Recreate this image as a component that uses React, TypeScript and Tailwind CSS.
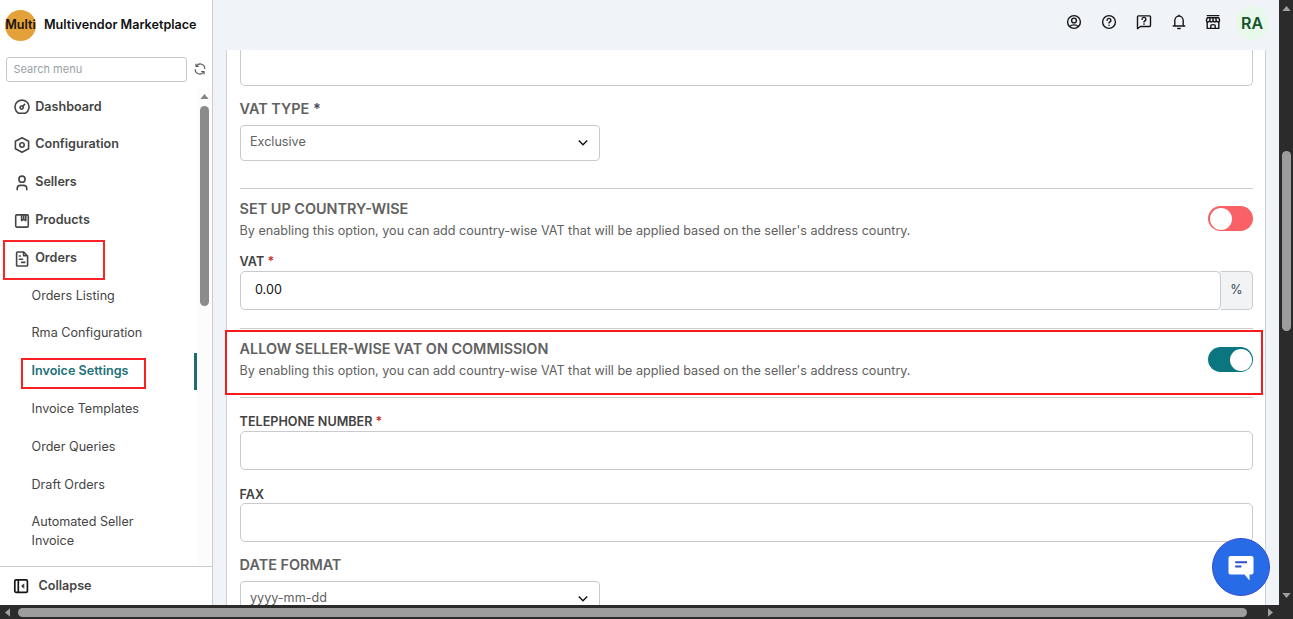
import React from "react";

type IconProps = { children: React.ReactNode; size?: string; width?: number };

function Icon({ children, size = "size-4", width = 1.6 }: IconProps) {
  return (
    <svg
      viewBox="0 0 16 16"
      className={`${size} shrink-0`}
      fill="none"
      stroke="currentColor"
      strokeWidth={width}
      strokeLinecap="round"
      strokeLinejoin="round"
    >
      {children}
    </svg>
  );
}

const DashboardIcon = () => (
  <Icon width={1.6}>
    <path d="M4.6 14.2A7 7 0 1 1 11.4 14.2Z" />
    <circle cx="7.6" cy="8.6" r="1.6" />
    <path d="M8.6 7.4 10.6 5.4" />
  </Icon>
);
const ConfigurationIcon = () => (
  <Icon width={1.6}>
    <path d="M8 .8 14.6 4.3V11.7L8 15.2 1.4 11.7V4.3Z" />
    <circle cx="8" cy="8" r="2.2" />
  </Icon>
);
const SellersIcon = () => (
  <Icon width={1.6}>
    <circle cx="8" cy="4.2" r="3.1" />
    <path d="M3.2 14.8V13.6A3.2 3.2 0 0 1 6.4 10.4H9.6A3.2 3.2 0 0 1 12.8 13.6V14.8" />
  </Icon>
);
const ProductsIcon = () => (
  <Icon width={1.6}>
    <rect x="1.7" y="1.9" width="12.6" height="12.2" rx="1" />
    <path d="M7.6 2V7.6L9.7 6.2 11.8 7.6V2M9.7 2.2V5.6" />
  </Icon>
);
const OrdersIcon = () => (
  <Icon width={1.6}>
    <path d="M3.6 1H9.6L13.6 5V14.2A.8.8 0 0 1 12.8 15H3.4A.8.8 0 0 1 2.6 14.2V2A1 1 0 0 1 3.6 1Z" />
    <path d="M9.6 1.4V4.8H13.2M5.4 5H6.4M5.4 8.2H8.6M7.6 11.4H10.8" />
  </Icon>
);
const CollapseIcon = () => (
  <Icon width={1.7}>
    <rect x="1.8" y="1.8" width="12.6" height="12.6" rx="1.4" />
    <path d="M5.3 2V14.2" />
    <path d="M10.6 6.1 8.6 8.1 10.6 10.1Z" fill="currentColor" strokeWidth="0.6" />
  </Icon>
);
const RefreshIcon = () => (
  <Icon size="size-3" width={1.5}>
    <path d="M1.6 8.6A6 6 0 0 0 12.6 12M14.4 7.4A6 6 0 0 0 3.4 4" />
    <path d="M2.6 1.4V4.6H5.8M13.4 14.6V11.4H10.2" />
  </Icon>
);
const AccountIcon = () => (
  <Icon width={1.4}>
    <circle cx="8" cy="8" r="6.4" />
    <circle cx="8" cy="6.5" r="2.4" />
    <path d="M3.8 12.4C5.6 10.4 10.4 10.4 12.2 12.4" />
  </Icon>
);
const HelpIcon = () => (
  <Icon width={1.4}>
    <circle cx="8" cy="8" r="6.4" />
    <path d="M6.1 6.4A1.9 1.9 0 1 1 8.8 8Q8 8.4 8 9.1" />
    <path d="M8 11.2V11.3" strokeWidth="1.6" />
  </Icon>
);
const ChatHelpIcon = () => (
  <Icon width={1.4}>
    <path d="M2.4 1.9H13.6Q14.5 1.9 14.5 2.8V11.6Q14.5 12.5 13.6 12.5H4.4L1.5 14.7V2.8Q1.5 1.9 2.4 1.9Z" />
    <path d="M6.1 5.4A1.9 1.9 0 1 1 8.8 7Q8 7.4 8 8" />
    <path d="M8 10V10.1" strokeWidth="1.6" />
  </Icon>
);
const BellIcon = () => (
  <Icon width={1.4}>
    <path d="M2.2 12H13.8M3.8 11.8V6.6A4.2 4.6 0 0 1 12.2 6.6V11.8M8 1.6V1.2" />
    <path d="M6.8 14.5H9.2" />
  </Icon>
);
const StoreIcon = () => (
  <Icon width={1.4}>
    <path d="M2.2 1.6H13.8M2.2 3.8H13.8L14.6 6.4Q14.6 8 13 8 11.4 8 11.4 6.6 11.2 8 9.6 8 8 8 8 6.6 8 8 6.4 8 4.8 8 4.6 6.6 4.6 8 3 8 1.4 8 1.4 6.4Z" />
    <path d="M5 4V6.2M8 4V6.2M11 4V6.2M2.2 8V14.4H13.8V8M5.8 14.2V11.8Q5.8 10.6 8 10.6 10.2 10.6 10.2 11.8V14.2" />
  </Icon>
);
const Chevron = () => (
  <svg viewBox="0 0 10 6" className="h-1.5 w-2.5" fill="none" stroke="#111" strokeWidth="1.4">
    <path d="M.8.5 5 4.7 9.2.5" />
  </svg>
);

const menu = [
  { label: "Dashboard", icon: <DashboardIcon /> },
  { label: "Configuration", icon: <ConfigurationIcon /> },
  { label: "Sellers", icon: <SellersIcon /> },
  { label: "Products", icon: <ProductsIcon /> },
  { label: "Orders", icon: <OrdersIcon /> },
];

const submenu = [
  "Orders Listing",
  "Rma Configuration",
  "Invoice Settings",
  "Invoice Templates",
  "Order Queries",
  "Draft Orders",
];

function Sidebar() {
  return (
    <aside className="flex w-[213px] shrink-0 flex-col border-r border-[#c9ccd3] bg-white">
      <div className="flex h-[50px] shrink-0 items-center pl-[5px]">
        <div className="flex size-[31px] items-center justify-center rounded-full bg-[#e5a139]">
          <span className="text-[12.6px] font-semibold text-[#17130c]">Multi</span>
        </div>
        <span className="ml-2 whitespace-nowrap text-[12.6px] font-semibold text-[#111]">
          Multivendor Marketplace
        </span>
      </div>
      <div className="mt-[7px] flex shrink-0 items-center pl-1.5">
        <div className="flex h-[25px] w-[181px] items-center rounded-[3px] border border-[#c3c8cd] pl-[6.5px] text-[11px] text-[#9a9fa6]">
          Search menu
        </div>
        <span className="-mt-0.5 ml-[7px] text-[#555]">
          <RefreshIcon />
        </span>
      </div>
      <div className="mt-1.5 flex min-h-0 flex-1">
        <nav className="w-[197px] pt-[0.1px] text-[12.6px] leading-[18.9px] text-[#454545]">
          {menu.map((item) => (
            <div key={item.label} className="flex h-[37.8px] items-center pl-[13.5px] font-semibold">
              <span className="mt-px">{item.icon}</span>
              <span className="ml-[5.7px]">{item.label}</span>
            </div>
          ))}
          {submenu.map((label) =>
            label === "Invoice Settings" ? (
              <div
                key={label}
                className="flex h-[37.8px] items-center border-r-[3px] border-[#1c6c73] pl-[31.5px] font-semibold text-[#1c7178]"
              >
                {label}
              </div>
            ) : (
              <div key={label} className="flex h-[37.8px] items-center pl-[31.5px]">
                {label}
              </div>
            )
          )}
          <div className="w-[150px] py-[9px] pl-[31.5px]">Automated Seller Invoice</div>
        </nav>
        <div className="flex w-[15px] flex-col items-center bg-[#fcfcfc] pt-1.5">
          <svg viewBox="0 0 10 6" className="h-[5px] w-[9px]" fill="#858585">
            <path d="M5 0 10 6H0Z" />
          </svg>
          <div className="mt-[7px] h-[200px] w-[9px] rounded-full bg-[#8b8b8b]" />
        </div>
      </div>
      <div className="flex h-[39px] shrink-0 items-center border-t border-[#c9cccf] pl-[13px] text-[12.6px] font-semibold text-[#454545]">
        <span className="text-[#161616]">
          <CollapseIcon />
        </span>
        <span className="ml-[9.5px]">Collapse</span>
      </div>
    </aside>
  );
}

function Toggle({ on = false }: { on?: boolean }) {
  return (
    <div
      className={
        on
          ? "flex h-[25px] w-[45px] items-center justify-end rounded-full bg-[#0b7680] px-px"
          : "flex h-[25px] w-[45px] items-center justify-start rounded-full bg-[#f96166] px-0.5"
      }
    >
      <div className="size-[22px] rounded-full bg-white" />
    </div>
  );
}

function ToggleRow({ title, on }: { title: string; on?: boolean }) {
  return (
    <div className="flex justify-between">
      <div className="text-[#616161]">
        <h2 className="-ml-[0.4px] text-[14.4px] font-semibold leading-[22px]">{title}</h2>
        <p className="-ml-[0.4px] text-[12.6px] leading-[22px]">
          By enabling this option, you can add country-wise VAT that will be applied based on the seller's
          address country.
        </p>
      </div>
      <div className={on ? "mt-[9px]" : "mt-2"}>
        <Toggle on={on} />
      </div>
    </div>
  );
}

function Select({ value }: { value: string }) {
  return (
    <div className="flex h-9 w-[360px] shrink-0 items-center justify-between rounded-[4px] border border-[#c8cacd] pl-[9px] pr-[11px] text-[12.6px] text-[#616161]">
      <span className="-mt-0.5">{value}</span>
      <Chevron />
    </div>
  );
}

function Label({ children, required }: { children: string; required?: boolean }) {
  return (
    <div className="-ml-[0.4px] text-[12.6px] font-semibold leading-5 text-[#424242]">
      {children}
      {required && <span className="text-[#d0292c]"> *</span>}
    </div>
  );
}

function Settings() {
  return (
    <section className="ml-[13px] flex min-h-0 w-[1040px] flex-1 flex-col overflow-hidden border-x border-[#cdd1d9] bg-white pl-[13px] pr-3">
      <div className="h-9 shrink-0 rounded-b-[5px] border border-t-0 border-[#c8cacd]" />
      <h2 className="-ml-[0.4px] mt-3 text-[14.4px] font-semibold leading-[22px] text-[#616161]">
        VAT TYPE <span className="text-[#42474f]">*</span>
      </h2>
      <div className="mt-[5px]">
        <Select value="Exclusive" />
      </div>
      <div className="mt-[27px] border-t border-[#cccdcf] pt-[9px]">
        <ToggleRow title="SET UP COUNTRY-WISE" />
      </div>
      <div className="pt-2.5">
        <Label required>VAT</Label>
        <div className="-mt-px flex h-[39px] rounded-[5px] bg-[#f1f3f5]">
          <div className="flex flex-1 items-center rounded-[5px] border border-[#c8cacd] bg-white pl-3.5 text-[12.6px] text-[#111]">
            0.00
          </div>
          <div className="flex w-8 items-center justify-center rounded-r-[5px] border border-l-0 border-[#c8cacd] text-[12.6px] text-[#3d4757]">
            %
          </div>
        </div>
      </div>
      <div className="mt-[18px] border-t border-[#cccdcf] pt-[9px]">
        <ToggleRow title="ALLOW SELLER-WISE VAT ON COMMISSION" on />
      </div>
      <div className="mt-[15px] border-t border-[#cccdcf] pt-[14px]">
        <Label required>TELEPHONE NUMBER</Label>
        <div className="-mt-px h-[39px] rounded-[5px] border border-[#c8cacd]" />
      </div>
      <div className="mt-[15px]">
        <Label>FAX</Label>
        <div className="-mt-0.5 h-[39px] rounded-[5px] border border-[#c8cacd]" />
      </div>
      <h2 className="-ml-[0.4px] mb-[5px] mt-3 text-[14.4px] font-semibold leading-[22px] text-[#616161]">
        DATE FORMAT
      </h2>
      <Select value="yyyy-mm-dd" />
    </section>
  );
}

export default function App() {
  return (
    <div className="relative flex h-[619px] w-[1293px] flex-col overflow-hidden bg-[#2b2b2b] font-['Inter',sans-serif]">
      <div className="flex h-[605px] shrink-0">
        <Sidebar />
        <main className="flex w-[1066px] flex-col bg-[#f0f3f8]">
          <header className="flex h-[50px] shrink-0 items-center justify-end pb-1 pr-2.5 text-[#161616]">
            <div className="mb-[3px] mr-[13.6px] flex gap-[18.8px]">
              <AccountIcon />
              <HelpIcon />
              <ChatHelpIcon />
              <BellIcon />
              <StoreIcon />
            </div>
            <div className="flex size-[34px] items-center justify-center rounded-full bg-[#e8f8ea] text-base font-semibold text-[#17532b]">
              RA
            </div>
          </header>
          <Settings />
        </main>
        <div className="flex w-3.5 flex-col items-center pt-1.5">
          <svg viewBox="0 0 10 6" className="h-[5px] w-[9px]" fill="#a0a0a0">
            <path d="M5 0 10 6H0Z" />
          </svg>
          <div className="mt-[140px] h-[180px] w-[9px] rounded-full bg-[#9d9d9d]" />
          <svg viewBox="0 0 10 6" className="mb-[7px] mt-auto h-[5px] w-[9px]" fill="#a0a0a0">
            <path d="M0 0H10L5 6Z" />
          </svg>
        </div>
      </div>
      <div className="flex h-3.5 items-center pl-[5px] pt-px">
        <svg viewBox="0 0 6 10" className="h-[9px] w-[5px]" fill="#a0a0a0">
          <path d="M6 0V10L0 5Z" />
        </svg>
        <div className="ml-2 h-[9px] w-[1229px] rounded-full bg-[#9d9d9d]" />
        <svg viewBox="0 0 6 10" className="ml-[21px] h-[9px] w-[5px]" fill="#a0a0a0">
          <path d="M0 0V10L6 5Z" />
        </svg>
      </div>

      <div className="absolute left-[3px] top-[240px] h-10 w-[102px] border-2 border-[#fb2525]" />
      <div className="absolute left-[21px] top-[358px] h-[31px] w-[125px] border-2 border-[#fb2020]" />
      <div className="absolute left-[225px] top-[330px] h-[65px] w-[1038px] border-2 border-[#fb1a1a]" />
      <button
        aria-label="Chat"
        className="absolute left-[1212px] top-[538px] flex size-[58px] items-center justify-center rounded-full border border-[#3a4fd0] bg-[#276be6]"
      >
        <svg viewBox="0 0 26 26" className="mt-0.5 size-[26px]">
          <path
            d="M2.5 1H23.5Q25.5 1 25.5 3V17.5Q25.5 19.5 23.5 19.5H21.5V25.5L16.5 19.5H2.5Q.5 19.5 .5 17.5V3Q.5 1 2.5 1Z"
            fill="#fff"
          />
          <path d="M7.2 7.2H19M7.2 11.6H13.4" stroke="#2b52c8" strokeWidth="2" />
        </svg>
      </button>
    </div>
  );
}
